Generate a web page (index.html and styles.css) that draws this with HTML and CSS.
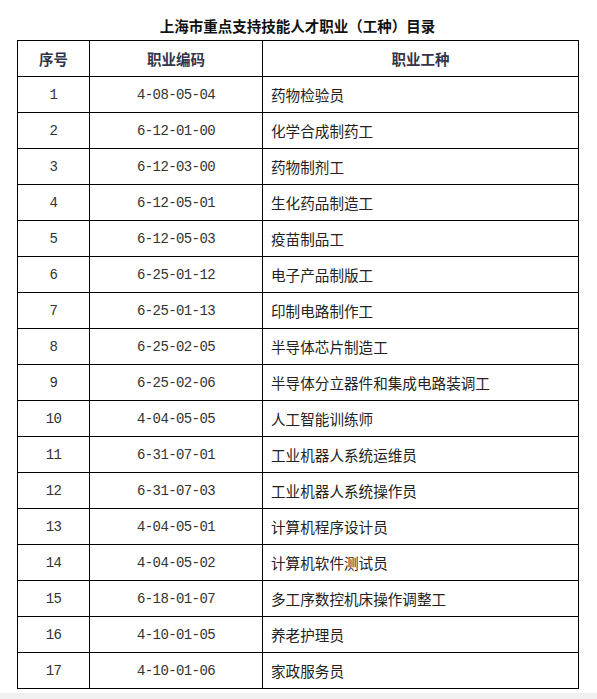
FILE: index.html
```html
<!DOCTYPE html>
<html lang="zh-CN">
<head>
<meta charset="utf-8">
<link rel="stylesheet" href="styles.css">
</head>
<body>
<div class="page">
  <h1 class="title">上海市重点支持技能人才职业（工种）目录</h1>
  <table class="list">
    <colgroup><col class="c1"><col class="c2"><col class="c3"></colgroup>
    <thead>
      <tr><th>序号</th><th>职业编码</th><th>职业工种</th></tr>
    </thead>
    <tbody>
      <tr><td class="num">1</td><td class="num">4-08-05-04</td><td class="name">药物检验员</td></tr>
      <tr><td class="num">2</td><td class="num">6-12-01-00</td><td class="name">化学合成制药工</td></tr>
      <tr><td class="num">3</td><td class="num">6-12-03-00</td><td class="name">药物制剂工</td></tr>
      <tr><td class="num">4</td><td class="num">6-12-05-01</td><td class="name">生化药品制造工</td></tr>
      <tr><td class="num">5</td><td class="num">6-12-05-03</td><td class="name">疫苗制品工</td></tr>
      <tr><td class="num">6</td><td class="num">6-25-01-12</td><td class="name">电子产品制版工</td></tr>
      <tr><td class="num">7</td><td class="num">6-25-01-13</td><td class="name">印制电路制作工</td></tr>
      <tr><td class="num">8</td><td class="num">6-25-02-05</td><td class="name">半导体芯片制造工</td></tr>
      <tr><td class="num">9</td><td class="num">6-25-02-06</td><td class="name">半导体分立器件和集成电路装调工</td></tr>
      <tr><td class="num">10</td><td class="num">4-04-05-05</td><td class="name">人工智能训练师</td></tr>
      <tr><td class="num">11</td><td class="num">6-31-07-01</td><td class="name">工业机器人系统运维员</td></tr>
      <tr><td class="num">12</td><td class="num">6-31-07-03</td><td class="name">工业机器人系统操作员</td></tr>
      <tr><td class="num">13</td><td class="num">4-04-05-01</td><td class="name">计算机程序设计员</td></tr>
      <tr><td class="num">14</td><td class="num">4-04-05-02</td><td class="name">计算机软件测试员</td></tr>
      <tr><td class="num">15</td><td class="num">6-18-01-07</td><td class="name">多工序数控机床操作调整工</td></tr>
      <tr><td class="num">16</td><td class="num">4-10-01-05</td><td class="name">养老护理员</td></tr>
      <tr><td class="num">17</td><td class="num">4-10-01-06</td><td class="name">家政服务员</td></tr>
    </tbody>
  </table>
</div>
<div class="band"></div>
</body>
</html>
```
FILE: styles.css
```css
html, body {
  margin: 0;
  padding: 0;
  background: #fff;
}
.page {
  height: 693px;
  padding: 0 0 0 17px;
  box-sizing: border-box;
  font-family: "Noto Sans CJK SC", "Noto Sans", sans-serif;
  color: #222;
}
.title {
  margin: 0;
  width: 561px;
  height: 40px;
  padding-top: 16px;
  box-sizing: border-box;
  text-align: center;
  font-size: 14.5px;
  line-height: 20px;
  font-weight: 700;
  color: #111;
}
.list {
  border-collapse: collapse;
  table-layout: fixed;
  width: 561px;
}
.c1 { width: 72px; }
.c2 { width: 173px; }
.c3 { width: 316px; }
.list tr {
  height: 36px;
}
.list th, .list td {
  border: 1px solid #000;
  height: 36px;
  padding: 0;
  box-sizing: border-box;
  vertical-align: middle;
}
.list th {
  font-size: 14.5px;
  font-weight: 700;
  color: #33334a;
  text-align: center;
}
.list td.num {
  font-family: "Liberation Mono", monospace;
  font-size: 14px;
  letter-spacing: -0.6px;
  text-align: center;
  color: #333;
}
.list td.name {
  font-size: 14.6px;
  text-align: left;
  padding-left: 8px;
  color: #222;
}
.band {
  height: 6px;
  background: #f0f0f0;
}
```
